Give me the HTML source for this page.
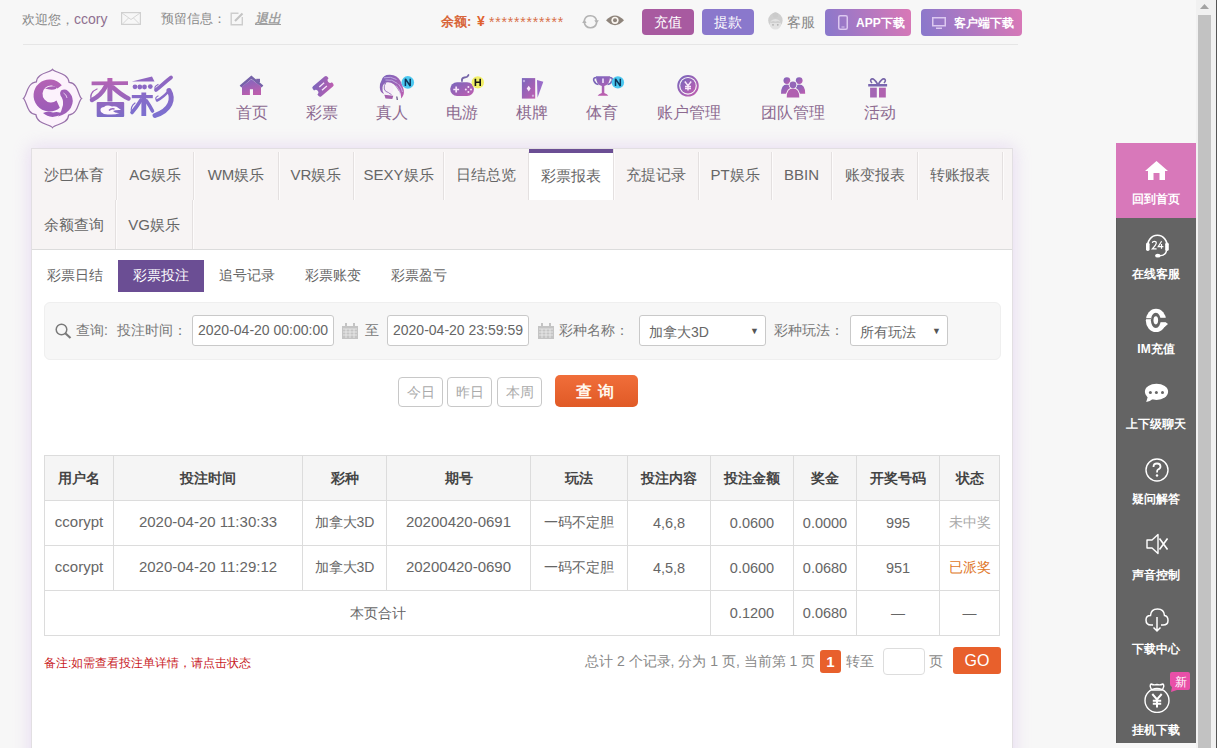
<!DOCTYPE html>
<html><head><meta charset="utf-8">
<style>
*{margin:0;padding:0;box-sizing:border-box}
html,body{width:1217px;height:748px;overflow:hidden}
body{position:relative;background:#f7f7f7;font-family:"Liberation Sans",sans-serif;font-size:14px;color:#666}
.a{position:absolute;white-space:nowrap}
/* top bar */
.tl{color:#8a8a8a;font-size:13px;line-height:16px}
.topline{position:absolute;left:23px;top:44px;width:995px;height:1px;background:#e6e6e6}
.btn{position:absolute;top:9px;height:26px;border-radius:4px;color:#fff;font-size:14px;line-height:26px;text-align:center}
.grad{background:linear-gradient(75deg,#8878cc,#da78b6);top:9px;height:27px;font-weight:bold;font-size:12px;line-height:28px}
/* nav */
.nav{position:absolute;top:72px;height:60px;text-align:center}
.nav .t{position:absolute;left:0;right:0;top:30px;font-size:16px;color:#8d6a90;line-height:22px}
.nav svg{position:absolute}
/* panel */
.panel{position:absolute;left:31px;top:148px;width:982px;height:640px;background:#fff;border:1px solid #e2dfe2;box-shadow:0 0 16px 1px rgba(200,160,230,.32)}
.tabs{position:absolute;left:0;top:0;width:980px;height:101px;background:#f7f4f4;border-bottom:1px solid #dcdcdc}
.tab{position:absolute;height:51px;line-height:52px;font-size:15px;color:#666;text-align:center;padding-right:1px}
.tab::after{content:"";position:absolute;right:0;top:3px;bottom:0;width:1px;background:#e4e0e0;box-shadow:1px 0 0 #fdfbfb}
.tab.r2::after{top:0}
.tab.on{background:#fff;border-top:4px solid #6b4e94;line-height:46px}
.tab.on::after{top:-4px}
.sub{position:absolute;top:111px;height:32px;line-height:31px;font-size:14px;color:#666;text-align:center;width:86px}
.sub.on{background:#6b4e94;color:#fff}
.search{position:absolute;left:12px;top:153px;width:957px;height:58px;background:#f7f7f7;border:1px solid #efefef;border-radius:6px}
.lbl{position:absolute;font-size:14px;color:#777;line-height:18px}
.inp{position:absolute;top:12px;height:31px;background:#fff;border:1px solid #c9c9c9;border-radius:3px;font-size:14px;color:#666;line-height:29px;padding-left:5px}
.dbtn{position:absolute;top:228px;height:30px;border:1px solid #c8c8c8;border-radius:4px;font-size:14px;color:#aaa;line-height:28px;text-align:center;width:45px}
table{position:absolute;left:12px;top:306px;border-collapse:collapse;table-layout:fixed}
td,th{border:1px solid #dcdcdc;text-align:center;height:45px;font-size:14px;color:#666;font-weight:normal;padding:0}
td.l{font-size:15px;padding-bottom:3px}td.m{font-size:14.5px;padding-bottom:1px}
th{background:#f5f5f5;color:#444;font-weight:bold;padding-top:2px}
/* side */
.side{position:absolute;left:1116px;top:143px;width:80px;height:600px;background:#646464;box-shadow:inset 1px 0 0 #5c5c5c}
.si{position:absolute;left:0;width:80px;height:75px;text-align:center}
.si .t{position:absolute;left:0;right:0;font-size:12px;color:#fff;font-weight:bold;line-height:14px}
.si svg{position:absolute}
</style></head><body>

<!-- TOP BAR -->
<div class="a tl" style="left:22px;top:11px">欢迎您，<span style="color:#8f7090;font-size:14px">ccory</span></div>
<svg class="a" style="left:121px;top:12px" width="20" height="13" viewBox="0 0 20 13"><rect x="0.6" y="0.6" width="18.8" height="11.8" fill="none" stroke="#d0d0d0" stroke-width="1.2"/><path d="M1 1 L10 7.5 L19 1 M1 12.5 L7.5 6 M19 12.5 L12.5 6" fill="none" stroke="#d6d6d6"/></svg>
<div class="a tl" style="left:161px;top:11px">预留信息：</div>
<svg class="a" style="left:230px;top:12px" width="14" height="14" viewBox="0 0 14 14"><path d="M8.5 1.2 H1.2 V12.8 H12.3 V5" fill="none" stroke="#cdcdcd" stroke-width="1.4"/><path d="M5 9 L12.5 1.5" stroke="#c4c4c4" stroke-width="2.2"/></svg>
<div class="a tl" style="left:255px;top:11px;font-style:italic;font-weight:bold;text-decoration:underline;color:#a0a0a0">退出</div>

<div class="a" style="left:441px;top:14px;font-size:13px;font-weight:bold;color:#d8653a;line-height:16px">余额:</div>
<div class="a" style="left:477px;top:13px;font-size:14px;font-weight:bold;color:#e0622e;line-height:16px">¥</div>
<div class="a" style="left:489px;top:15px;font-size:14px;color:#d8704a;line-height:14px;letter-spacing:0.8px">************</div>
<svg class="a" style="left:582px;top:13px" width="17" height="17" viewBox="0 0 17 17"><path d="M2.3 7.5 A6.3 6.3 0 0 1 14.6 7.8" fill="none" stroke="#b3b3b3" stroke-width="1.6"/><path d="M14.6 10 A6.3 6.3 0 0 1 2.3 9.5" fill="none" stroke="#b3b3b3" stroke-width="1.6"/><path d="M12.3 7.2 L16.8 7.2 L14.6 11Z" fill="#b3b3b3"/><path d="M0.2 10 L4.6 10 L2.3 6.3Z" fill="#b3b3b3"/></svg>
<svg class="a" style="left:606px;top:14px" width="18" height="13" viewBox="0 0 18 13"><path d="M0 6.3 Q9 -3.5 18 6.3 Q9 16 0 6.3Z" fill="#8e847b"/><circle cx="9" cy="6.3" r="3.6" fill="#fbf6f0"/><circle cx="9" cy="6.3" r="2" fill="#8e847b"/></svg>
<div class="btn" style="left:642px;width:52px;background:#a85aa0">充值</div>
<div class="btn" style="left:702px;width:52px;background:#8a78cc">提款</div>
<svg class="a" style="left:768px;top:12px" width="15" height="18" viewBox="0 0 15 18"><ellipse cx="7.4" cy="8.5" rx="7.2" ry="7.8" fill="#cfcfcf"/><circle cx="7.4" cy="3" r="2.8" fill="#cbcbcb"/><ellipse cx="7.4" cy="12.3" rx="5.6" ry="5.2" fill="#e2e2e2"/><path d="M1.8 11 Q4 8 7.4 9.5 Q11 8 13 11" fill="#cfcfcf"/><circle cx="5" cy="12.8" r="0.9" fill="#b0b0b0"/><circle cx="9.8" cy="12.8" r="0.9" fill="#b0b0b0"/></svg>
<div class="a tl" style="left:787px;top:15px;font-size:13.5px;color:#888">客服</div>
<div class="btn grad" style="left:825px;width:86px;text-align:left;padding-left:31px">APP下载</div>
<svg class="a" style="left:838px;top:15px" width="10" height="15" viewBox="0 0 10 15"><rect x="0.75" y="0.75" width="8.5" height="13.5" rx="1.5" fill="none" stroke="#dcc8f0" stroke-width="1.5"/><rect x="3.5" y="11.5" width="3" height="1" fill="#dcc8f0"/></svg>
<div class="btn grad" style="left:921px;width:101px;text-align:left;padding-left:33px">客户端下载</div>
<svg class="a" style="left:932px;top:17px" width="14" height="12" viewBox="0 0 14 12"><rect x="0.75" y="0.75" width="12.5" height="8" fill="none" stroke="#dcc8f0" stroke-width="1.5"/><rect x="4" y="10.5" width="6" height="1.5" fill="#dcc8f0"/></svg>
<div class="topline"></div>

<!-- LOGO -->
<svg class="a" style="left:21px;top:67px" width="64" height="64" viewBox="0 0 64 64">
 <defs><linearGradient id="lg" x1="0" y1="0" x2="0" y2="1"><stop offset="0" stop-color="#b462b4"/><stop offset="1" stop-color="#9c5cb8"/></linearGradient></defs>
 <path d="M31.5 2.4 C34.0 6.0 47.0 5.5 48.1 15.4 C57.5 16.0 57.0 29.0 60.6 31.5 C57.0 34.0 57.5 47.0 47.6 48.1 C47.0 57.5 34.0 57.0 31.5 60.6 C29.0 57.0 16.0 57.5 14.9 47.6 C5.5 47.0 6.0 34.0 2.4 31.5 C6.0 29.0 5.5 16.0 15.4 14.9 C16.0 5.5 29.0 6.0 31.5 2.4 Z" fill="#fcf2fc" stroke="#9872aa" stroke-width="1.2"/>
 <path d="M40.8 18.2 A16 16 0 1 0 38.8 40.8 L35.5 33.5 A8.5 8.5 0 1 1 36.5 21.5Z" fill="url(#lg)"/>
 <path d="M24 21.5 Q29 18.5 35 19.5 Q37 21.5 33 22.5 Q28 23 24 21.5Z" fill="#a85fb5"/>
 <path d="M40 23.5 Q44 21.5 47 24 Q51.5 28 51.8 34 Q51.5 41 45 46 Q41 48.5 37 49.5 Q41 44 42 38 Q42.5 32 39.5 28.5 Q38.5 25.5 40 23.5Z" fill="#a060b8"/>
 <path d="M42.5 26 Q45.5 27.5 46 31" fill="none" stroke="#f5e4f8" stroke-width="0.8"/>
 <path d="M22 46 Q27 44 32 45.5 Q37 44 41 46.5 Q37 49.5 31.5 50 Q26 49.5 22 46Z" fill="#9a5cb8"/>
</svg>
<svg class="a" style="left:85px;top:70px" width="95" height="52" viewBox="0 0 95 52">
 <defs>
  <linearGradient id="xg" gradientUnits="userSpaceOnUse" x1="0" y1="8" x2="0" y2="47"><stop offset="0" stop-color="#b662b4"/><stop offset="0.5" stop-color="#9a66bc"/><stop offset="1" stop-color="#7a6cc8"/></linearGradient>
  <linearGradient id="cg" gradientUnits="userSpaceOnUse" x1="0" y1="7" x2="0" y2="46"><stop offset="0" stop-color="#9066c0"/><stop offset="1" stop-color="#7c70d0"/></linearGradient>
 </defs>
 <g fill="url(#xg)" stroke="none">
  <path d="M6.6 11.5 L43 11.2 L43 15 L6.6 15.2Z"/>
  <rect x="22.4" y="8" width="5" height="23.5"/>
  <rect x="11.7" y="32" width="27.5" height="15" rx="1"/>
 </g>
 <g fill="none" stroke="url(#xg)" stroke-linecap="round">
  <path d="M21 16 C18 22 13 27 7 30" stroke-width="4.5"/>
  <path d="M7 30 C4 26 7 21 12 19" stroke-width="1.3"/>
  <path d="M28 17.5 C33 22 38 26 43.5 28.5" stroke-width="4.5"/>
 </g>
 <path d="M16 42 Q14 37.5 19 37 Q22 34.5 27 36.5 Q31 35.5 34 38.5 L36 40 Q31 39.5 28 41 Q30 43.5 34.5 43 Q30 45 24 44.5 Q19 45 16 42Z" fill="#fdf6fd"/>
 <path d="M24 40.5 Q26 38 29.5 39" fill="none" stroke="#9468c0" stroke-width="1.4"/>
 <g fill="url(#cg)">
  <path d="M46.8 11.5 L67 6.5 L69.5 11.5 Z"/>
  <circle cx="50" cy="16.8" r="2.4"/><circle cx="54.8" cy="17" r="2.4"/><circle cx="59.5" cy="17" r="2.4"/><circle cx="65.3" cy="16.6" r="2.4"/>
  <rect x="46.8" y="25" width="21" height="3.2"/>
  <rect x="56.4" y="22.5" width="4.8" height="23.5"/>
 </g>
 <g fill="none" stroke="url(#cg)" stroke-linecap="round">
  <path d="M56 30 C53 35 50 39 47 42.5" stroke-width="3.6"/>
  <path d="M47 42.5 C45 39 47 35 50 33" stroke-width="1.2"/>
  <path d="M61.5 31 Q65 36 67.5 41" stroke-width="3.6"/>
  <path d="M86 7.5 C80 12 76 16.5 71 20" stroke-width="3.8"/>
  <path d="M71 20 Q68 17 73 14.5" stroke-width="1.2"/>
  <path d="M72 30.5 Q79 27 84 20.5" stroke-width="2.6"/>
  <path d="M84 20.5 C89 29 86 40 70 45.5" stroke-width="5"/>
  <path d="M72 30.5 Q69 28 73 26" stroke-width="1.2"/>
 </g>
</svg>
<!-- NAV -->
<div class="nav" style="left:217px;width:70px"><div class="t">首页</div></div>
<div class="nav" style="left:287px;width:70px"><div class="t">彩票</div></div>
<div class="nav" style="left:357px;width:70px"><div class="t">真人</div></div>
<div class="nav" style="left:427px;width:70px"><div class="t">电游</div></div>
<div class="nav" style="left:497px;width:70px"><div class="t">棋牌</div></div>
<div class="nav" style="left:567px;width:70px"><div class="t">体育</div></div>
<div class="nav" style="left:637px;width:104px"><div class="t">账户管理</div></div>
<div class="nav" style="left:741px;width:104px"><div class="t">团队管理</div></div>
<div class="nav" style="left:845px;width:70px"><div class="t">活动</div></div>
<svg class="a" style="left:0;top:0" width="1000" height="110" viewBox="0 0 1000 110">
 <defs>
  <linearGradient id="ng" x1="0" y1="0" x2="0.35" y2="1"><stop offset="0" stop-color="#7c66c0"/><stop offset="1" stop-color="#bb5fae"/></linearGradient>
  <linearGradient id="ng2" x1="0" y1="0" x2="1" y2="1"><stop offset="0" stop-color="#7866bc"/><stop offset="1" stop-color="#c05eb0"/></linearGradient>
  <filter id="soft" x="-50%" y="-50%" width="200%" height="200%"><feGaussianBlur stdDeviation="0.35"/></filter>
 </defs>
 <!-- home -->
 <path d="M240.5 86.5 L251.4 77.3 L262.5 86.5" fill="none" stroke="#7562a8" stroke-width="2.6" stroke-linejoin="miter"/>
 <rect x="256.2" y="78.8" width="3.8" height="3.5" fill="#7a62aa"/>
 <path d="M242 86.5 L251.4 79.3 L261 86.5 V95 H253 V89.2 H249.9 V95 H242Z" fill="url(#ng)"/>
 <!-- ticket -->
 <g transform="translate(323 86.4) rotate(-40)">
  <path d="M-9.5 -4.5 Q-9.5 -6.5 -7.5 -6.5 H7.5 Q9.5 -6.5 9.5 -4.5 V-2.6 A2.6 2.6 0 0 0 9.5 2.6 V4.5 Q9.5 6.5 7.5 6.5 H-7.5 Q-9.5 6.5 -9.5 4.5 V2.6 A2.6 2.6 0 0 0 -9.5 -2.6Z" fill="url(#ng2)"/>
  <path d="M-3.2 -2 H3.2 M-3.2 2.2 H3.2" stroke="#f8e6fa" stroke-width="1.3"/>
 </g>
 <!-- woman -->
 <g>
  <ellipse cx="388.5" cy="88.5" rx="5" ry="6.2" fill="#f7ecf8"/>
  <path d="M381.5 80.5 Q383 74.5 390 74.8 Q397.5 75.2 400.5 81 Q402.5 85.5 403.8 90 Q404.5 95.5 401 98.5 Q401.5 93.5 398.5 90.5 Q396.5 87 394 84.5 Q390 81.5 386 82.5 Q383 84 382.5 87.5 Q382 91 384 94 Q380 92.5 379.8 87.5 Q379.8 83 381.5 80.5Z" fill="url(#ng2)"/>
  <path d="M384 77.8 Q391 76 396.5 79.5 M385.5 80 Q392 78.8 397.5 83.5 M396 85.5 Q400.5 90 400.5 95.5 M398.5 84 Q402 88 402.5 92" fill="none" stroke="#d4c4f2" stroke-width="0.7"/>
  <path d="M386 82.6 Q383.5 85.5 384.3 89 Q385 91.8 388.5 92.6 Q390 94 391.5 94.5" fill="none" stroke="#9070b8" stroke-width="0.9"/>
  <path d="M384.3 94.8 Q389 95.5 393.3 95.8 L392.3 99 L385.5 98.6Z" fill="#a460ae"/>
  <path d="M396.8 96.5 L397.3 100" stroke="#5e4e80" stroke-width="1.2"/>
 </g>
 <g filter="url(#soft)"><circle cx="407.8" cy="82.4" r="6.3" fill="#4cc8f0"/></g>
 <path d="M405.4 86 V78.8 L410.2 86 V78.8" fill="none" stroke="#0c3458" stroke-width="1.5" stroke-linejoin="bevel"/>
 <!-- gamepad -->
 <path d="M462 81 Q461.5 78 464.5 77.5 Q467.5 77.5 468.5 75" fill="none" stroke="#7464a8" stroke-width="1.8" stroke-linecap="round"/>
 <rect x="450.2" y="82.2" width="23.8" height="13.7" rx="6.85" fill="url(#ng2)"/>
 <path d="M453.3 89.5 H459.1 M456.2 86.6 V92.4" stroke="#f6e4fa" stroke-width="1.7"/>
 <circle cx="468.4" cy="86.9" r="1" fill="#f6e4fa"/><circle cx="468.4" cy="92.1" r="1" fill="#f6e4fa"/><circle cx="465.8" cy="89.5" r="1" fill="#f6e4fa"/><circle cx="471" cy="89.5" r="1" fill="#f6e4fa"/>
 <g filter="url(#soft)"><circle cx="477.8" cy="82.4" r="6.2" fill="#f2ef66"/></g>
 <path d="M475.4 78.8 V86 M480.2 78.8 V86 M475.4 82.3 H480.2" stroke="#151515" stroke-width="1.6"/>
 <!-- cards -->
 <rect x="521.9" y="78.1" width="13.3" height="20.5" fill="url(#ng2)"/>
 <path d="M537 80 L543.3 81.8 L537.5 97.8Z" fill="#9a6cc8"/>
 <path d="M528.7 85.8 L530.7 88.6 L528.7 91.4 L526.7 88.6Z" fill="#f8eafa"/>
 <path d="M524 79.5 L525.3 81 L524 82.5 L522.7 81Z M533 94.2 L534.3 95.7 L533 97.2 L531.7 95.7Z" fill="#d8c8f0" opacity="0.8"/>
 <!-- trophy -->
 <path d="M596 76.2 H610 Q610 84.5 604.3 86 V93 Q607.5 94 608.3 95.8 H597.6 Q598.5 94 601.8 93 V86 Q596 84.5 596 76.2Z" fill="url(#ng)"/>
 <path d="M596.5 77.5 Q593 77.5 593.8 80.5 Q595 84 598.5 84.5 M609.5 77.5 Q613 77.5 612.2 80.5 Q611 84 607.5 84.5" fill="none" stroke="#7a66b8" stroke-width="1.7"/>
 <path d="M603 78.5 V83" stroke="#efe2fb" stroke-width="1.6"/>
 <g filter="url(#soft)"><circle cx="617.9" cy="82.4" r="6.2" fill="#4cc8f0"/></g>
 <path d="M615.5 86 V78.8 L620.3 86 V78.8" fill="none" stroke="#0c3458" stroke-width="1.5" stroke-linejoin="bevel"/>
 <!-- coin -->
 <circle cx="688" cy="85.8" r="9.8" fill="none" stroke="url(#ng2)" stroke-width="1.9"/>
 <circle cx="688" cy="85.8" r="7.7" fill="url(#ng2)"/>
 <path d="M684.8 81.5 L688 85.6 L691.2 81.5 M688 85.6 V90.5 M685 86.5 H691 M685 88.6 H691" fill="none" stroke="#f8e8fa" stroke-width="1.5"/>
 <!-- people -->
 <g fill="url(#ng2)">
  <circle cx="786.9" cy="80.6" r="3.4"/><path d="M781 93.7 Q781 84.5 786.9 84.5 Q790 84.5 791 86 L789 93.7Z"/>
  <circle cx="799.2" cy="80.6" r="3.4"/><path d="M805.2 93.7 Q805.2 84.5 799.2 84.5 Q796 84.5 795 86 L797 93.7Z"/>
 </g>
 <circle cx="793" cy="84.8" r="4.3" fill="#f7f7f7"/><path d="M785.5 98.5 Q785.5 87.5 793 87.5 Q800.5 87.5 800.5 98.5Z" fill="#f7f7f7"/>
 <circle cx="793" cy="84.8" r="3.4" fill="#9466b8"/><path d="M786.7 97.5 Q786.7 88.5 793 88.5 Q799.3 88.5 799.3 97.5Z" fill="#b060b0"/>
 <!-- gift -->
 <path d="M877.5 84 Q874 78 871.5 79 Q869.5 80.5 872 83 M878.5 84 Q882 78 884.5 79 Q886.5 80.5 884 83" fill="none" stroke="#7664a8" stroke-width="1.6"/>
 <rect x="868.2" y="84" width="18.9" height="2.5" fill="#7a66b0"/>
 <rect x="870.1" y="87.7" width="6.7" height="9.8" fill="#a466b4"/><rect x="879" y="87.7" width="6.8" height="9.8" fill="#b062b0"/>
</svg>

<!-- PANEL -->
<div class="panel">
 <div class="tabs">
  <div class="tab" style="left:0;top:0;width:85px">沙巴体育</div>
  <div class="tab" style="left:85px;top:0;width:77px">AG娱乐</div>
  <div class="tab" style="left:162px;top:0;width:85px">WM娱乐</div>
  <div class="tab" style="left:247px;top:0;width:75px">VR娱乐</div>
  <div class="tab" style="left:322px;top:0;width:90px">SEXY娱乐</div>
  <div class="tab" style="left:412px;top:0;width:85px">日结总览</div>
  <div class="tab on" style="left:497px;top:0;width:85px">彩票报表</div>
  <div class="tab" style="left:582px;top:0;width:85px">充提记录</div>
  <div class="tab" style="left:667px;top:0;width:73px">PT娱乐</div>
  <div class="tab" style="left:740px;top:0;width:60px">BBIN</div>
  <div class="tab" style="left:800px;top:0;width:86px">账变报表</div>
  <div class="tab" style="left:886px;top:0;width:85px">转账报表</div>
  <div class="tab r2" style="left:0;top:51px;width:84px;height:49px;line-height:49px">余额查询</div>
  <div class="tab r2" style="left:84px;top:51px;width:77px;height:49px;line-height:49px">VG娱乐</div>
 </div>
 <div class="sub" style="left:0px">彩票日结</div>
 <div class="sub on" style="left:86px">彩票投注</div>
 <div class="sub" style="left:172px">追号记录</div>
 <div class="sub" style="left:258px">彩票账变</div>
 <div class="sub" style="left:344px">彩票盈亏</div>

 <div class="search">
  <svg class="a" style="left:10px;top:20px" width="17" height="16" viewBox="0 0 17 16"><circle cx="6.5" cy="6.5" r="5.3" fill="none" stroke="#7a7a7a" stroke-width="1.5"/><path d="M10.3 10.3 L15.5 15" stroke="#7a7a7a" stroke-width="2.2"/></svg>
  <div class="lbl" style="left:31px;top:17.5px">查询:</div>
  <div class="lbl" style="left:72px;top:17.5px">投注时间：</div>
  <div class="inp" style="left:147px;width:142px">2020-04-20 00:00:00</div>
  <svg class="a" style="left:297px;top:20px" width="16" height="16" viewBox="0 0 16 16"><rect x="0" y="3" width="16" height="13" fill="#c4c4c4"/><rect x="3" y="0" width="2" height="4" fill="#c4c4c4"/><rect x="11" y="0" width="2" height="4" fill="#c4c4c4"/><path d="M1 6 H15 M1 9 H15 M1 12 H15 M4 6 V15 M8 6 V15 M12 6 V15" stroke="#eee" stroke-width="0.8"/></svg>
  <div class="lbl" style="left:320px;top:17.5px">至</div>
  <div class="inp" style="left:342px;width:142px">2020-04-20 23:59:59</div>
  <svg class="a" style="left:493px;top:20px" width="16" height="16" viewBox="0 0 16 16"><rect x="0" y="3" width="16" height="13" fill="#c4c4c4"/><rect x="3" y="0" width="2" height="4" fill="#c4c4c4"/><rect x="11" y="0" width="2" height="4" fill="#c4c4c4"/><path d="M1 6 H15 M1 9 H15 M1 12 H15 M4 6 V15 M8 6 V15 M12 6 V15" stroke="#eee" stroke-width="0.8"/></svg>
  <div class="lbl" style="left:514px;top:17.5px">彩种名称：</div>
  <div class="inp" style="left:594px;width:127px;padding-left:9px;line-height:33px">加拿大3D<span style="position:absolute;right:6px;top:-1px;font-size:9px;color:#555">▼</span></div>
  <div class="lbl" style="left:729px;top:17.5px">彩种玩法：</div>
  <div class="inp" style="left:805px;width:98px;padding-left:9px;line-height:33px">所有玩法<span style="position:absolute;right:6px;top:-1px;font-size:9px;color:#555">▼</span></div>
 </div>

 <div class="dbtn" style="left:366px">今日</div>
 <div class="dbtn" style="left:415px">昨日</div>
 <div class="dbtn" style="left:465px">本周</div>
 <div class="a" style="left:523px;top:226px;width:83px;height:32px;border-radius:5px;background:linear-gradient(180deg,#f06e3a,#e05a26);color:#fff8ee;font-size:16px;font-weight:bold;text-align:center;line-height:33px;letter-spacing:6px;text-indent:2px">查询</div>

 <table>
  <colgroup><col style="width:69px"><col style="width:189px"><col style="width:84px"><col style="width:144px"><col style="width:97px"><col style="width:83px"><col style="width:83px"><col style="width:63px"><col style="width:83px"><col style="width:60px"></colgroup>
  <tr><th>用户名</th><th>投注时间</th><th>彩种</th><th>期号</th><th>玩法</th><th>投注内容</th><th>投注金额</th><th>奖金</th><th>开奖号码</th><th>状态</th></tr>
  <tr><td class="l">ccorypt</td><td class="l">2020-04-20 11:30:33</td><td>加拿大3D</td><td class="l">20200420-0691</td><td>一码不定胆</td><td class="m">4,6,8</td><td class="m">0.0600</td><td class="m">0.0000</td><td class="m">995</td><td style="color:#aaa">未中奖</td></tr>
  <tr><td class="l">ccorypt</td><td class="l">2020-04-20 11:29:12</td><td>加拿大3D</td><td class="l">20200420-0690</td><td>一码不定胆</td><td class="m">4,5,8</td><td class="m">0.0600</td><td class="m">0.0680</td><td class="m">951</td><td style="color:#e0782a">已派奖</td></tr>
  <tr><td colspan="6" style="padding-top:2px">本页合计</td><td class="m">0.1200</td><td class="m">0.0680</td><td>—</td><td>—</td></tr>
 </table>

 <div class="a" style="left:12px;top:506px;font-size:12px;color:#c8201e;line-height:16px">备注:如需查看投注单详情，请点击状态</div>
 <div class="a" style="left:553px;top:503px;font-size:14px;color:#888;line-height:18px">总计 2 个记录, 分为 1 页, 当前第 1 页</div>
 <div class="a" style="left:788px;top:501px;width:21px;height:23px;background:#e8602c;border-radius:3px;color:#fff;font-weight:bold;font-size:15px;line-height:23px;text-align:center">1</div>
 <div class="a" style="left:814px;top:503px;font-size:14px;color:#888;line-height:18px">转至</div>
 <div class="a" style="left:851px;top:499px;width:42px;height:27px;border:1px solid #ddd;border-radius:4px;background:#fff"></div>
 <div class="a" style="left:897px;top:503px;font-size:14px;color:#888;line-height:18px">页</div>
 <div class="a" style="left:921px;top:498px;width:48px;height:27px;background:#e8602c;border-radius:3px;color:#fff;font-size:16px;line-height:27px;text-align:center">GO</div>
</div>

<!-- SIDE -->
<div class="side">
 <div class="si" style="top:0;background:#d878ba"><svg style="left:29px;top:18px" width="23" height="19" viewBox="0 0 23 19"><path d="M11.5 0 L23 10 L20 10 L20 19 L14.5 19 L14.5 12 L8.5 12 L8.5 19 L3 19 L3 10 L0 10Z" fill="#fff"/></svg><div class="t" style="top:49px">回到首页</div></div>
 <div class="si" style="top:75px"><svg style="left:29px;top:90px;top:15px" width="25" height="26" viewBox="0 0 25 26"><path d="M3.3 14 A9.4 9.4 0 1 1 21.5 14" fill="none" stroke="#fff" stroke-width="1.6"/><path d="M21.5 16.5 Q21.5 22.5 14.5 22.8" fill="none" stroke="#fff" stroke-width="1.4"/><rect x="1" y="9.5" width="3.6" height="8.5" rx="1.7" fill="#fff"/><rect x="20.2" y="9.5" width="3.6" height="8.5" rx="1.7" fill="#fff"/><ellipse cx="12.8" cy="22.7" rx="2.7" ry="1.9" fill="#fff"/><path d="M7.3 9.8 Q7.5 8.3 9.3 8.3 Q11.3 8.3 11.3 10 Q11.3 11.5 7.3 15.8 H11.6 M16.6 8.3 L13.2 13.6 H18.4 M16.5 11 V15.8" fill="none" stroke="#fff" stroke-width="1.2"/></svg><div class="t" style="top:49px">在线客服</div></div>
 <div class="si" style="top:150px"><svg style="left:29px;top:15px" width="24" height="26" viewBox="0 0 24 26"><ellipse cx="11" cy="12.4" rx="10.2" ry="11.7" fill="#fff"/><rect x="15" y="9.8" width="9" height="4.6" fill="#666"/><path d="M14 14.4 L21 14.4 L23 16 Q19.5 20 15 21.5Z" fill="#fff"/><ellipse cx="10.8" cy="12.3" rx="4.9" ry="7.6" fill="#666"/><ellipse cx="10.8" cy="12.3" rx="2.3" ry="4.1" fill="#fff"/><rect x="0" y="10.2" width="6" height="1" fill="#666"/></svg><div class="t" style="top:49px">IM充值</div></div>
 <div class="si" style="top:225px"><svg style="left:28px;top:14px" width="26" height="22" viewBox="0 0 26 22"><ellipse cx="12.5" cy="9.8" rx="11.6" ry="8.1" fill="#fff"/><path d="M4 14 L2.2 20 Q6 19.5 9.5 16.5Z" fill="#fff"/><circle cx="6.4" cy="10.4" r="1.5" fill="#666"/><circle cx="12.4" cy="10.4" r="1.5" fill="#666"/><circle cx="18.5" cy="10.4" r="1.5" fill="#666"/></svg><div class="t" style="top:49px">上下级聊天</div></div>
 <div class="si" style="top:300px"><svg style="left:29px;top:15px" width="24" height="24" viewBox="0 0 24 24"><circle cx="12" cy="12" r="11" fill="none" stroke="#fff" stroke-width="1.4"/><path d="M8.5 9 Q8.5 5.5 12 5.5 Q15.5 5.5 15.5 8.5 Q15.5 10.5 13 11.5 Q12 12 12 14.5" fill="none" stroke="#fff" stroke-width="1.8"/><circle cx="12" cy="17.5" r="1.2" fill="#fff"/></svg><div class="t" style="top:49px">疑问解答</div></div>
 <div class="si" style="top:375px"><svg style="left:30px;top:15px" width="22" height="22" viewBox="0 0 22 22"><path d="M1 7 H6 L12 1.5 V20.5 L6 15 H1Z" fill="none" stroke="#fff" stroke-width="1.4" stroke-linejoin="round"/><path d="M13.5 5.5 L21.5 16.5 M21.5 5.5 L13.5 16.5" stroke="#fff" stroke-width="1.6"/></svg><div class="t" style="top:50px">声音控制</div></div>
 <div class="si" style="top:450px"><svg style="left:29px;top:15px" width="24" height="25" viewBox="0 0 24 25"><path d="M8 17 H6 Q1 17 1 12 Q1 7.5 5.5 7.5 Q6 1 12.5 1 Q19 1 19.5 7.5 Q23 8 23 12.5 Q23 17 18 17 H16" fill="none" stroke="#fff" stroke-width="1.5"/><path d="M12 9 V23 M8.5 19.5 L12 23 L15.5 19.5" fill="none" stroke="#fff" stroke-width="1.5"/></svg><div class="t" style="top:49px">下载中心</div></div>
 <div class="si" style="top:525px;height:75px"><svg style="left:26px;top:14px" width="30" height="31" viewBox="0 0 30 31"><path d="M10 8 Q7 4 9 2 Q12 3.5 15 2.5 Q18 3.5 21 2 Q23 4 20 8Z" fill="none" stroke="#fff" stroke-width="1.4"/><circle cx="15" cy="18.5" r="12" fill="none" stroke="#fff" stroke-width="1.4"/><path d="M10.3 12 L15 17.5 L19.7 12 M15 17.5 V25.5 M10.8 18.8 H19.2 M10.8 21.8 H19.2" fill="none" stroke="#fff" stroke-width="2"/></svg>
  <svg style="left:54px;top:4px" width="20" height="20" viewBox="0 0 20 20"><path d="M2 0 H18 Q20 0 20 2 V16 Q20 18 18 18 H7 L1 20 L2 15 Q0 14 0 12 V2 Q0 0 2 0Z" fill="#e94fa8"/><text x="10.5" y="14" font-size="12" fill="#fff" text-anchor="middle">新</text></svg>
  <div class="t" style="top:55px">挂机下载</div></div>
</div>

<!-- SCROLLBAR -->
<div class="a" style="left:1196px;top:0;width:21px;height:748px;background:#f1f1f1"></div>
<div class="a" style="left:1198px;top:15px;width:13px;height:733px;background:#c2c2c2"></div>
<svg class="a" style="left:1200px;top:4px" width="9" height="5" viewBox="0 0 9 5"><path d="M0 5 L4.5 0 L9 5Z" fill="#a3a3a3"/></svg>
<div class="a" style="left:1216px;top:0;width:1px;height:748px;background:#555"></div>
</body></html>
